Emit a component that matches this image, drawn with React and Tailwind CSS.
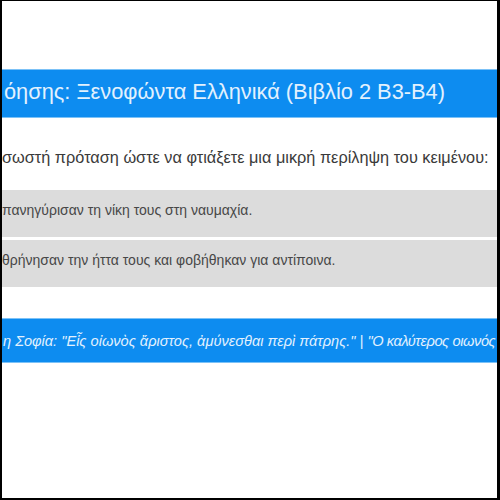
export default function App() {
    return (
        <div className="w-[500px] h-[500px] bg-white border-l-2 border-t border-r-[3px] border-b-2 border-black overflow-hidden flex flex-col font-['Liberation_Sans',Arial,sans-serif]">
            {/* top space */}
            <div className="h-[68px] shrink-0" />

            {/* title bar */}
            <div className="h-[49px] shrink-0 bg-[#0d8cf0] border-y border-[#7cc2f7] flex items-center pb-[3px] overflow-hidden whitespace-nowrap">
                <span className="text-[21.8px] text-[#e2f1fe] pl-[2px]">όησης: Ξενοφώντα Ελληνικά (Βιβλίο 2 Β3-Β4)</span>
            </div>

            {/* question */}
            <div className="h-[72px] shrink-0 flex items-center pt-[6px] whitespace-nowrap overflow-hidden">
                <span className="text-[16.3px] text-[#3a3a3a]">σωστή πρόταση ώστε να φτιάξετε μια μικρή περίληψη του κειμένου:</span>
            </div>

            {/* options */}
            <div className="flex flex-col gap-[3px]">
                <div className="h-[47px] bg-[#dcdcdc] flex items-center pb-[7px] whitespace-nowrap overflow-hidden">
                    <span className="text-[14px] text-[#474747]">πανηγύρισαν τη νίκη τους στη ναυμαχία.</span>
                </div>
                <div className="h-[47px] bg-[#dcdcdc] flex items-center pb-[7px] whitespace-nowrap overflow-hidden">
                    <span className="text-[14px] text-[#474747]">θρήνησαν την ήττα τους και φοβήθηκαν για αντίποινα.</span>
                </div>
            </div>

            <div className="h-[31px] shrink-0" />

            {/* quote bar */}
            <div className="h-[45px] shrink-0 bg-[#0d8cf0] border-y border-[#7cc2f7] flex items-center pt-[3px] overflow-hidden whitespace-nowrap">
                <span className="text-[14.6px] italic text-[#e2f1fe] pl-[1px]">
                    η Σοφία: "Εἷς οἰωνὸς ἄριστος, ἀμύνεσθαι περὶ πάτρης." | <span className="tracking-[-0.4px]">"Ο καλύτερος οιωνός</span>
                </span>
            </div>
        </div>
    );
}
